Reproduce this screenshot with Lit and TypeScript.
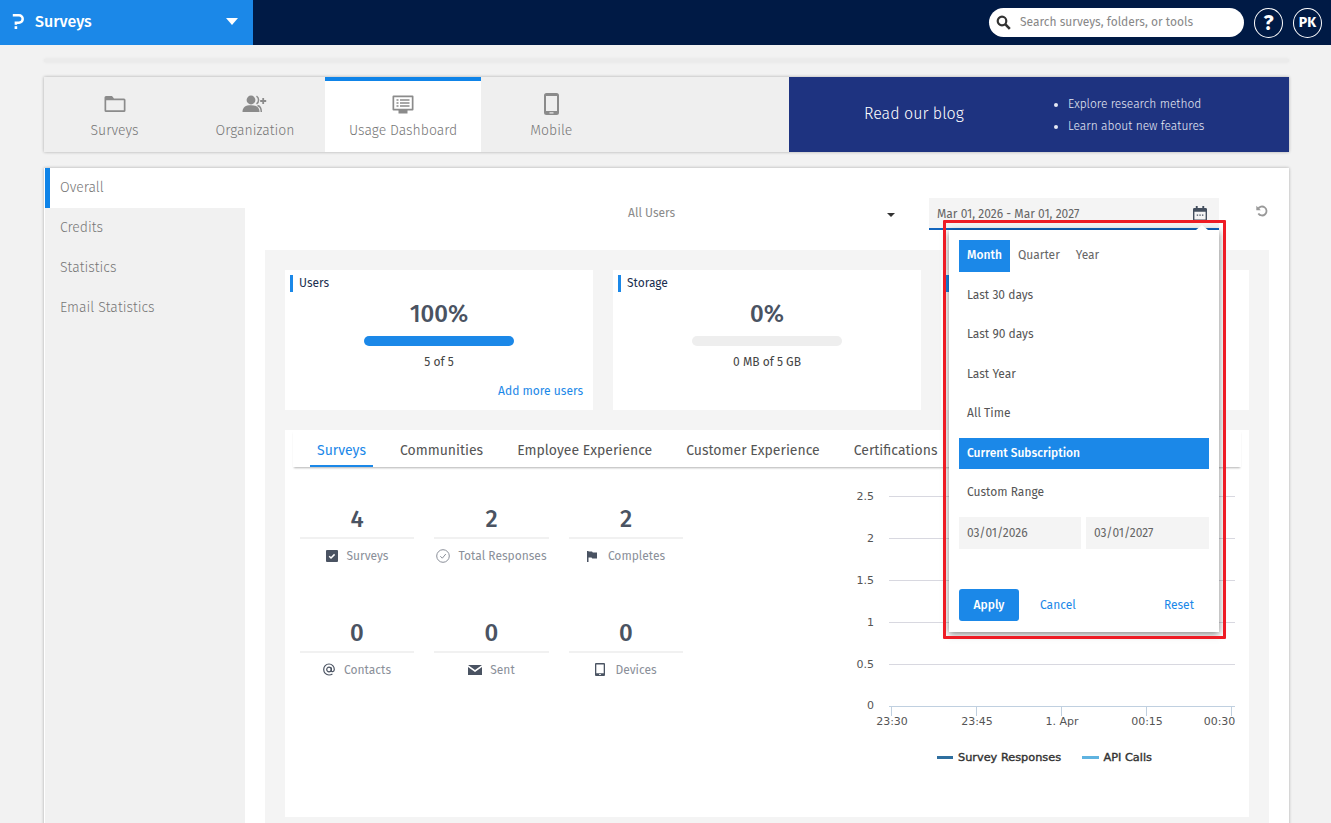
import { LitElement, html, css, svg } from "lit";
import { customElement } from "lit/decorators.js";

const I = {
  folder: html`<svg width="22" height="18" viewBox="0 0 22 18"><path d="M2 1h6l2 2.400h10a1.500 1.500 0 0 1 1.500 1.500v10.600a1.500 1.500 0 0 1-1.500 1.500H2a1.500 1.500 0 0 1-1.500-1.500V2.500A1.500 1.500 0 0 1 2 1zm.2 4.200v10h17.600v-10z" fill="#8b8b8b" fill-rule="evenodd"/></svg>`,
  org: html`<svg width="26" height="18" viewBox="0 0 26 18"><circle cx="9" cy="5" r="4.400" fill="#8b8b8b"/><path d="M0.500 17c0-5 3-6.800 8.500-6.800S17.500 12 17.500 17z" fill="#8b8b8b"/><path d="M14.500 1.200a4.500 4.500 0 0 1 0 7.600M15.500 10.500c2.500.6 3.800 2.500 3.800 6.500" stroke="#8b8b8b" stroke-width="1.500" fill="none"/><path d="M21.200 3v6M18.200 6h6" stroke="#8b8b8b" stroke-width="1.800"/></svg>`,
  monitor: html`<svg width="22" height="19" viewBox="0 0 22 19"><path d="M1.500 .5h19a1 1 0 0 1 1 1v13a1 1 0 0 1-1 1h-5v3h-9v-3h-5a1 1 0 0 1-1-1v-13a1 1 0 0 1 1-1zm.7 1.700v11.600h17.600V2.200z" fill="#8b8b8b" fill-rule="evenodd"/><path d="M4.500 5h2M8 5h9.500M4.500 8h2M8 8h9.500M4.500 11h2M8 11h9.500" stroke="#8b8b8b" stroke-width="1.500"/></svg>`,
  phone: html`<svg width="15" height="22" viewBox="0 0 15 22"><path d="M2.500 0h10A2.500 2.500 0 0 1 15 2.500v17a2.500 2.500 0 0 1-2.500 2.500h-10A2.500 2.500 0 0 1 0 19.500v-17A2.500 2.500 0 0 1 2.500 0zM2 3v15h11V3z" fill="#8b8b8b" fill-rule="evenodd"/><rect x="5.500" y="19.300" width="4" height="1.200" fill="#eee"/></svg>`,
  check: html`<svg width="12" height="12" viewBox="0 0 12 12"><rect width="12" height="12" rx="1" fill="#4a5362"/><path d="M3.200 6.300 5 8l3.600-3.600" stroke="#fff" stroke-width="1.500" fill="none"/></svg>`,
  circ: html`<svg width="14" height="14" viewBox="0 0 14 14"><circle cx="7" cy="7" r="6.300" fill="none" stroke="#8a8f99"/><path d="M4.300 7.200 6.300 9.200 9.800 5" fill="none" stroke="#8a8f99"/></svg>`,
  flag: html`<svg width="10" height="11" viewBox="0 0 10 11"><path d="M0 0h1.500v11H0zM1.500 .5h3.500l.8 1H10v6H5.300l-.8-1h-3z" fill="#4a5362"/></svg>`,
  at: html`<svg width="12" height="13" viewBox="0 0 12 13"><circle cx="6" cy="6.500" r="2.300" fill="none" stroke="#4a5362" stroke-width="1.200"/><path d="M8.300 4.500v3.200c0 1.500 3 1.500 3-1.200C11.300 3.500 9 1 6 1S.7 3.500.7 6.500 3 12 6 12c1.400 0 2.400-.3 3.400-1" fill="none" stroke="#4a5362" stroke-width="1.200"/></svg>`,
  mail: html`<svg width="14" height="10" viewBox="0 0 14 10"><path d="M0 0h14L7 5zM0 2l7 5 7-5v8H0z" fill="#4a5362"/></svg>`,
  device: html`<svg width="10" height="13" viewBox="0 0 10 13"><path d="M1 0h8a1 1 0 0 1 1 1v11a1 1 0 0 1-1 1H1a1 1 0 0 1-1-1V1a1 1 0 0 1 1-1zm.3 1.500v8.800h7.400V1.500zM4.200 11h1.600v1H4.200z" fill="#4a5362" fill-rule="evenodd"/></svg>`,
};

const STATS = [
  { n: "4", l: "Surveys", i: I.check, g: 9 },
  { n: "2", l: "Total Responses", i: I.circ, g: 8 },
  { n: "2", l: "Completes", i: I.flag, g: 11 },
  { n: "0", l: "Contacts", i: I.at, g: 9 },
  { n: "0", l: "Sent", i: I.mail, g: 8 },
  { n: "0", l: "Devices", i: I.device, g: 10 },
];

const GRID: [number, string][] = [[496, "2.5"], [538, "2"], [580, "1.5"], [622, "1"], [664, "0.5"]];
const TICKS: [number, number, string][] = [[891, 892, "23:30"], [976, 977, "23:45"], [1061, 1062, "1. Apr"], [1146, 1147, "00:15"], [1231, 1219.5, "00:30"]];

@customElement("app-root")
export class AppRoot extends LitElement {
  static styles = css`
    :host { display: block; height: 823px; overflow: hidden; background: #f2f2f2; position: relative;
      font-family: "Fira Sans", Roboto, sans-serif; font-size: 12px; color: #555; }
    * { box-sizing: border-box; }
    .top { height: 45px; background: #001a45; display: flex; align-items: center; }
    .brand { width: 253px; height: 45px; background: #1b88e8; color: #fff; display: flex; align-items: center; padding: 0 0 3px 12px; font-size: 16px; font-weight: 500; }
    .brand svg { margin-right: 11px; }
    .brand .c { margin-left: auto; margin-right: 15px; width: 0; height: 0; border: 6px solid transparent; border-top: 7px solid #fff; border-bottom: 0; }
    .search { margin-left: auto; width: 255px; height: 29px; background: #fff; border-radius: 15px; display: flex; align-items: center; padding: 0 0 1px 7px; gap: 9px; color: #888; font-size: 12px; }
    .round { width: 29px; height: 30px; border-radius: 50%; border: 1.500px solid #fff; color: #fff; display: flex; align-items: center; justify-content: center; font-weight: 700; margin-left: 10px; }
    .round.q { font-size: 21px; }
    .round.pk { font-size: 14px; margin-right: 9px; }
    main { padding: 14px 42px 0 44px; }
    .rule { height: 3px; background: #ebebeb; box-shadow: 0 0 3px #e2e2e2; margin-bottom: 15px; width: 1245px; }
    .nav { height: 75px; display: flex; background: #efefef; box-shadow: 0 0 3px rgba(0,0,0,.3); width: 1245px; margin-bottom: 16px; }
    .nav .t { min-width: 140px; padding: 14px 24px 0; text-align: center; color: #777; font-size: 14px; font-weight: 300; display: flex; flex-direction: column; align-items: center; white-space: nowrap; }
    .nav .t .ic { height: 26px; display: flex; align-items: center; margin-bottom: 5px; }
    .nav .t:nth-child(1) { width: 141px; }
    .nav .t.on { background: #fff; border-top: 4px solid #0f84e8; padding-top: 10px; }
    .blog { margin-left: auto; width: 500px; background: #1e3380; color: #fff; display: flex; align-items: center; }
    .blog .h { font-size: 16px; font-weight: 300; margin: 0 0 2px 75px; width: 189px; }
    .blog ul { margin: 0; padding: 2px 0 0 15px; font-size: 12px; font-weight: 300; color: #e6e9f4; display: flex; flex-direction: column; gap: 7px; }
    .blog li { line-height: 15px; }
    .card { background: #fff; box-shadow: 0 0 3px rgba(0,0,0,.3); width: 1245px; height: 700px; display: flex; }
    .side { width: 201px; flex: none; padding-left: 1px; display: flex; flex-direction: column; }
    .side div { height: 40px; background: #f1f1f1; display: flex; align-items: center; padding: 0 0 2px 15px; color: #777; font-size: 14px; font-weight: 300; }
    .side div.on { background: #fff; border-left: 5px solid #0f84e8; padding-left: 10px; }
    .side div.fill { flex: 1; }
    .body { flex: 1; position: relative; min-width: 0; }
    .filter { height: 82px; display: flex; padding-top: 30px; }
    .fu { margin-left: 383px; width: 301px; height: 30px; display: flex; align-items: center; justify-content: space-between; padding: 0 34px 0 0; font-size: 12px; color: #8a8a8a; }
    .fu i { width: 0; height: 0; border: 4px solid transparent; border-top: 4px solid #333; border-bottom: 0; margin-top: 3px; }
    .date { width: 290px; height: 32px; background: #f4f4f4; border-bottom: 2px solid #1265bd; display: flex; align-items: center; justify-content: space-between; padding: 1px 12px 0 8px; font-size: 12px; color: #666; }
    .refresh { margin: 7px 0 0 37px; }
    .panel { margin-left: 20px; width: 1004px; background: #f4f4f4; padding: 20px; height: 620px; }
    .row { display: flex; gap: 20px; margin-bottom: 20px; }
    .u { flex: none; width: 308px; height: 140px; background: #fff; display: flex; flex-direction: column; align-items: center; position: relative; }
    .u .tt { align-self: flex-start; margin: 5px 0 0 5px; border-left: 3px solid #1b88e8; padding-left: 6px; height: 17px; line-height: 17px; color: #1b2f50; font-size: 12px; }
    .u .pct { font-size: 24px; line-height: 28px; font-weight: 500; color: #4a5362; margin-top: 8px; }
    .u .bar { width: 150px; height: 10px; border-radius: 5px; background: #eee; margin: 8px 1px 0 0; overflow: hidden; }
    .u .bar b { display: block; height: 100%; background: #1b88e8; }
    .u .cap { font-size: 12px; color: #444; margin-top: 9px; line-height: 15px; }
    .u .more { align-self: flex-end; margin: 14px 10px 0 0; color: #1b88e8; font-size: 12px; line-height: 15px; }
    .big { background: #fff; width: 964px; height: 387px; padding: 0 8px; }
    .tabs { height: 37px; display: flex; box-shadow: 0 2px 2px -1px rgba(0,0,0,.3); padding-left: 17px; color: #555; font-size: 14px; white-space: nowrap; }
    .tabs span { padding: 5px 7px 0; margin-right: 20px; display: flex; align-items: center; border-bottom: 2px solid transparent; }
    .tabs span.on { color: #1b88e8; border-color: #1b88e8; }
    .cols { display: flex; }
    .stats { display: grid; grid-template-columns: 114px 115px 114px; column-gap: 20px; padding: 38px 0 0 7px; align-content: start; row-gap: 46px; }
    .st { text-align: center; height: 67.500px; }
    .st .n { height: 34px; line-height: 28px; font-size: 24px; font-weight: 500; color: #4a5362; border-bottom: 2px solid #f1f1f1; }
    .st .l { height: 32px; display: flex; align-items: center; justify-content: center; color: #8a8f99; font-size: 12px; padding-top: 2px; white-space: nowrap; }
    .chart { margin: 13px -4px 0 auto; flex: none; font-family: "DejaVu Sans", sans-serif; }
    .chart text { font-size: 11px; fill: #555; }
    .chart .lg { font-size: 11.300px; fill: #333; stroke: #333; stroke-width: .4px; }
    .pop { position: absolute; left: 704px; top: 62px; width: 270px; height: 402px; background: #fff; box-shadow: 0 2px 7px rgba(0,0,0,.5); padding: 10px; z-index: 2; }
    .pop .arrow { position: absolute; right: 11px; top: -5px; width: 0; height: 0; border: 6px solid transparent; border-bottom: 5px solid #fff; border-top: 0; }
    .pop .seg { display: flex; height: 32px; align-items: center; color: #666; font-size: 12px; margin-bottom: 8.100px; }
    .pop .seg b { width: 51px; height: 32px; background: #1b88e8; color: #fff; display: flex; align-items: center; justify-content: center; font-weight: 500; margin-right: 8px; padding-bottom: 3px; }
    .pop .seg span { margin-right: 16px; padding-bottom: 3px; }
    .opt { height: 31px; display: flex; align-items: center; padding: 0 0 1px 8px; margin-bottom: 8.400px; color: #555; font-size: 12px; }
    .opt.on { background: #1b88e8; color: #fff; font-weight: 500; }
    .dates { display: flex; gap: 5px; margin-top: 9.400px; }
    .dates div { height: 32px; background: #f4f4f4; width: 122px; display: flex; align-items: center; padding-left: 8px; color: #666; font-size: 12px; }
    .dates div + div { width: 123px; }
    .acts { display: flex; align-items: center; margin-top: 40px; color: #1b88e8; font-size: 12px; }
    .acts b { width: 60px; height: 32px; border-radius: 3px; background: #1b88e8; color: #fff; display: flex; align-items: center; justify-content: center; font-weight: 500; margin-right: 21px; }
    .acts .r { margin-left: auto; margin-right: 15px; }
    .mark { position: absolute; left: 943px; top: 220px; width: 283px; height: 419px; border: 3px solid #ee1c25; border-radius: 1px; z-index: 3; pointer-events: none; }
  `;

  render() {
    return html`
      <div class="top">
        <div class="brand">
          <svg width="12" height="15" viewBox="0 0 12 15"><path d="M.8 1.300h6.200a3.700 3.700 0 0 1 0 7.400H3.900v2" fill="none" stroke="#fff" stroke-width="2.500"/><rect x="2.600" y="12.200" width="2.600" height="2.800" fill="#fff"/></svg>
          Surveys<span class="c"></span>
        </div>
        <div class="search">
          <svg width="15" height="15" viewBox="0 0 15 15"><circle cx="6" cy="6" r="4.300" fill="none" stroke="#333" stroke-width="2.200"/><path d="M9.200 9.200 13.800 13.800" stroke="#333" stroke-width="2.600"/></svg>
          <span>Search surveys, folders, or tools</span>
        </div>
        <div class="round q">?</div>
        <div class="round pk">PK</div>
      </div>
      <main>
        <div class="rule"></div>
        <div class="nav">
          <div class="t"><div class="ic">${I.folder}</div>Surveys</div>
          <div class="t"><div class="ic">${I.org}</div>Organization</div>
          <div class="t on"><div class="ic">${I.monitor}</div>Usage Dashboard</div>
          <div class="t"><div class="ic">${I.phone}</div>Mobile</div>
          <div class="blog">
            <div class="h">Read our blog</div>
            <ul><li>Explore research method</li><li>Learn about new features</li></ul>
          </div>
        </div>
        <div class="card">
          <div class="side">
            <div class="on">Overall</div><div>Credits</div><div>Statistics</div><div>Email Statistics</div><div class="fill"></div>
          </div>
          <div class="body">
            <div class="filter">
              <div class="fu"><span>All Users</span><i></i></div>
              <div class="date"><span>Mar 01, 2026 - Mar 01, 2027</span>
                <svg width="14" height="15" viewBox="0 0 15 16"><path d="M3 0h2v2h5V0h2v2h1.500A1.500 1.500 0 0 1 15 3.500v11a1.500 1.500 0 0 1-1.500 1.500h-12A1.500 1.500 0 0 1 0 14.500v-11A1.500 1.500 0 0 1 1.500 2H3zM1.500 6v8.500h12V6z" fill="#444f5e" fill-rule="evenodd"/><path d="M4 9h1.500v1.500H4zM6.800 9h1.500v1.500H6.800zM9.600 9h1.500v1.500H9.600z" fill="#444f5e"/></svg>
              </div>
              <svg class="refresh" width="12" height="12" viewBox="0 0 12 12"><path d="M2 4a4.500 4.500 0 1 1 .3 4.500" fill="none" stroke="#999" stroke-width="1.800"/><path d="M.3 .8v4.500h4.500z" fill="#999"/></svg>
            </div>
            <div class="panel">
              <div class="row">
                <div class="u"><div class="tt">Users</div><div class="pct">100%</div><div class="bar"><b style="width:100%"></b></div><div class="cap">5 of 5</div><div class="more">Add more users</div></div>
                <div class="u"><div class="tt">Storage</div><div class="pct">0%</div><div class="bar"><b style="width:0%"></b></div><div class="cap">0 MB of 5 GB</div></div>
                <div class="u"><div class="tt"></div></div>
              </div>
              <div class="big">
                <div class="tabs"><span class="on">Surveys</span><span>Communities</span><span>Employee Experience</span><span>Customer Experience</span><span>Certifications</span></div>
                <div class="cols">
                  <div class="stats">
                    ${STATS.map((s) => html`<div class="st"><div class="n">${s.n}</div><div class="l"><span style="display:flex;margin-right:${s.g}px">${s.i}</span>${s.l}</div></div>`)}
                  </div>
                  <svg class="chart" width="395" height="300" viewBox="850 480 395 300">
                    ${GRID.map(([y, t]) => svg`<line x1="889" x2="1235" y1=${y + .5} y2=${y + .5} stroke="#d8d8e0"/><text x="874" y=${y + 4} text-anchor="end">${t}</text>`)}
                    <text x="874" y="709" text-anchor="end">0</text>
                    <line x1="889" x2="1235" y1="706.500" y2="706.500" stroke="#c0d0e0"/>
                    ${TICKS.map(([x, tx, t]) => svg`<line x1=${x + .5} x2=${x + .5} y1="706" y2="716" stroke="#c0d0e0"/><text x=${tx} y="725" text-anchor="middle">${t}</text>`)}
                    <line x1="937" x2="953" y1="757.500" y2="757.500" stroke="#2f6f9f" stroke-width="3"/>
                    <text class="lg" x="958" y="761">Survey Responses</text>
                    <line x1="1082" x2="1099" y1="757.500" y2="757.500" stroke="#5fb3e0" stroke-width="3"/>
                    <text class="lg" x="1103.500" y="761">API Calls</text>
                  </svg>
                </div>
              </div>
            </div>
            <div class="pop">
              <div class="arrow"></div>
              <div class="seg"><b>Month</b><span>Quarter</span><span>Year</span></div>
              <div class="opt">Last 30 days</div>
              <div class="opt">Last 90 days</div>
              <div class="opt">Last Year</div>
              <div class="opt">All Time</div>
              <div class="opt on">Current Subscription</div>
              <div class="opt">Custom Range</div>
              <div class="dates"><div>03/01/2026</div><div>03/01/2027</div></div>
              <div class="acts"><b>Apply</b><span>Cancel</span><span class="r">Reset</span></div>
            </div>
          </div>
        </div>
      </main>
      <div class="mark"></div>
    `;
  }
}
